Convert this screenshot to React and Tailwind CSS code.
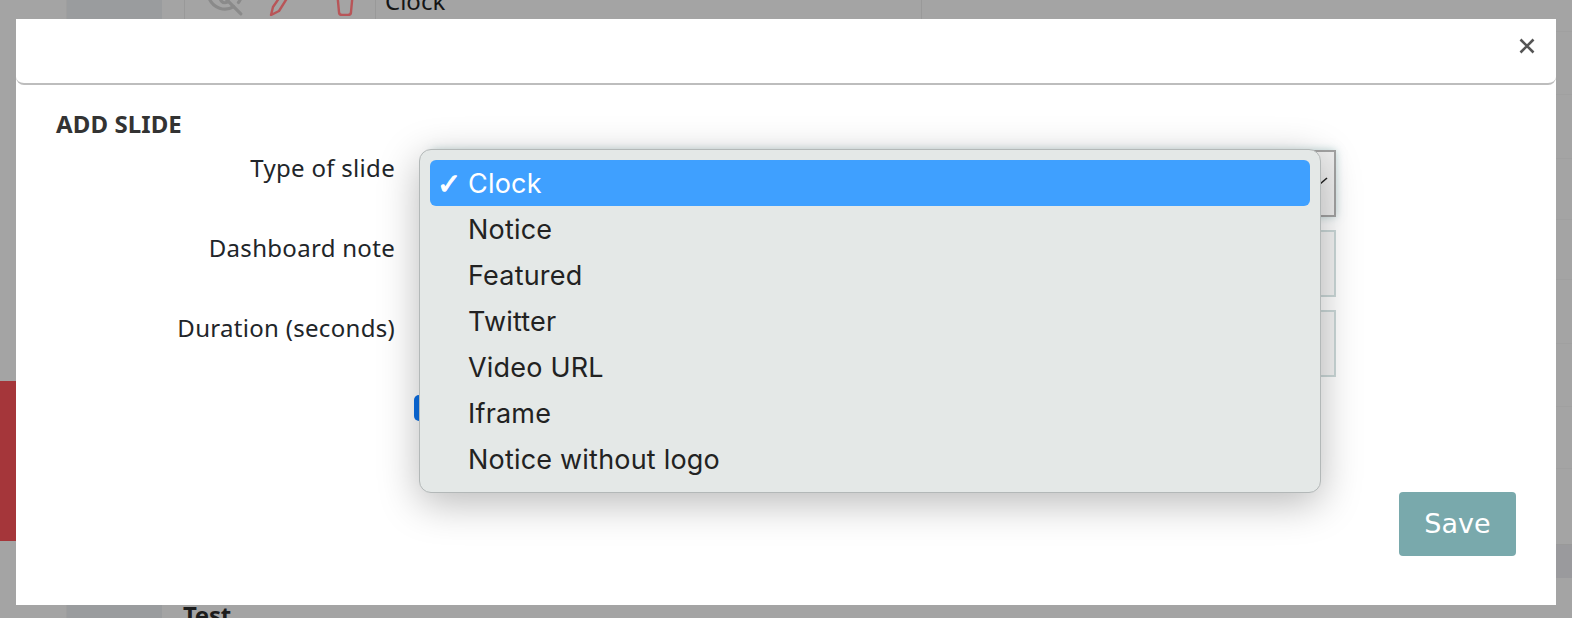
import React from "react";
import { EyeOff } from "lucide-react";

const items = ["Clock", "Notice", "Featured", "Twitter", "Video URL", "Iframe", "Notice without logo"];
const rowHeights = [
  "h-[63px]", "h-[64px]", "h-[61px]", "h-[60px]", "h-[64px]", "h-[63px]", "h-[62px]",
];

function Field({ label, selected }) {
  return (
    <div className="flex items-start h-[67px] mb-[13px]">
      <label className="w-[339px] pt-[3px] text-right text-[24px] leading-[30px] text-[#212529] font-['Noto_Sans',sans-serif] tracking-[0.3px]">
        {label}
      </label>
      <div
        className={
          selected
            ? "ml-[37px] flex-1 h-[67px] border-2 border-[#a3a3a3] bg-[#efefef] shadow-[0_0_8px_rgba(122,169,172,0.5)] flex items-center justify-end pr-[4px]"
            : "ml-[37px] flex-1 h-[67px] border-2 border-[#cbd8d8] bg-[#f4f4f4]"
        }
      >
        {selected && (
          <svg width="12" height="12" viewBox="0 0 12 12" className="mt-[-6px]">
            <path d="M2 9 L9 3" stroke="#222" strokeWidth="1.6" fill="none" />
          </svg>
        )}
      </div>
    </div>
  );
}

export default function App() {
  return (
    <div className="relative w-[1572px] h-[618px] overflow-hidden bg-[#a4a4a4] font-['Noto_Sans',sans-serif]">
      {/* page behind the dialog */}
      <div className="flex h-full">
        <div className="w-[66px] pt-[381px]">
          <div className="h-[160px] bg-[#a5363a]" />
        </div>
        <div className="w-[96px] bg-[#9a9c9e] border-l border-[#9f9f9f]" />
        <div className="flex-1 flex flex-col">
          <div className="h-[32px] shrink-0 flex pl-[22px] border-b border-[#a0a0a0]">
            <div className="w-[191px] h-[52px] border-l border-[#999] flex items-start pl-[21px] -mt-[20px]">
              <EyeOff size={38} strokeWidth={2} className="text-[#8a8a8a] shrink-0 mt-[-1px]" />
              <svg width="28" height="36" viewBox="0 0 28 36" className="ml-[25px] shrink-0">
                <path d="M2 35 L4 27 L22 1 L27 4 L10 31 Z" fill="none" stroke="#b85558" strokeWidth="2.4" strokeLinejoin="round" />
              </svg>
              <svg width="20" height="36" viewBox="0 0 20 36" className="ml-[38px] shrink-0">
                <path d="M1 0 L4 32 Q4 35 7 35 H13 Q16 35 16 32 L19 0" fill="none" stroke="#b85558" strokeWidth="2.4" />
              </svg>
            </div>
            <div className="w-[547px] h-[52px] border-l border-r border-[#999] pl-[9px] mt-[-20px] text-[24px] leading-[42px] text-[#151515]">
              Clock
            </div>
          </div>
          {rowHeights.map((h, i) => (
            <div key={i} className={h + " shrink-0 border-b border-[#a0a0a0]"} />
          ))}
          <div className="h-[76px] shrink-0 border-b border-[#999]" />
          <div className="h-[33px] shrink-0 bg-[#9a9a9d]" />
          <div className="h-[22px] shrink-0" />
          <div className="pl-[21px] text-[24px] leading-[30px] font-bold text-[#1c1c1c] tracking-[-0.3px]">Test</div>
        </div>
      </div>

      {/* dialog */}
      <div className="absolute left-[16px] top-[19px] w-[1540px] h-[586px] bg-white">
        <div className="h-[66px] border-b-2 border-[#bdbdbd] rounded-b-[8px] flex justify-end items-start pr-[21px] pt-[19px]">
          <svg width="16" height="16" viewBox="0 0 16 16">
            <path d="M1.5 1.5 L14.5 14.5 M14.5 1.5 L1.5 14.5" stroke="#555" strokeWidth="2.6" fill="none" />
          </svg>
        </div>
        <div className="px-[40px] pt-[23px]">
          <h2 className="h-[42px] text-[24px] leading-[32px] font-bold text-[#333] tracking-[0.1px]">ADD SLIDE</h2>
          <div className="w-[1280px]">
            <Field label="Type of slide" selected />
            <Field label="Dashboard note" />
            <Field label="Duration (seconds)" />
            <div className="h-[26px] mt-[18px] ml-[358px]">
              <div className="w-[26px] h-[26px] rounded-[5px] bg-[#0b6fe6]" />
            </div>
          </div>
          <div className="flex justify-end mt-[71px]">
            <button className="w-[117px] h-[64px] rounded-[4px] bg-[#79a9ac] text-white text-[27px] font-['DejaVu_Sans',sans-serif]">
              Save
            </button>
          </div>
        </div>

        {/* open select menu */}
        <div className="absolute left-[403px] top-[130px] w-[902px] h-[344px] p-[10px] rounded-[12px] border border-[#b3b8b8] bg-[#e4e8e7] shadow-[0_10px_40px_rgba(0,0,0,0.28)] font-['Inter',sans-serif] text-[27px] tracking-[0.2px] text-[#222]">
          {items.map((t, i) => (
            <div
              key={t}
              className={
                i === 0
                  ? "h-[46px] rounded-[6px] bg-[#3fa0ff] text-white flex items-center"
                  : "h-[46px] flex items-center"
              }
            >
              <span className="w-[38px] pl-[7px] pt-[3px] text-[29px] leading-none font-bold font-['DejaVu_Sans',sans-serif] [-webkit-text-stroke:1px_white]">{i === 0 ? "✓" : ""}</span>
              <span className="pt-[3px]">{t}</span>
            </div>
          ))}
        </div>
      </div>
    </div>
  );
}
